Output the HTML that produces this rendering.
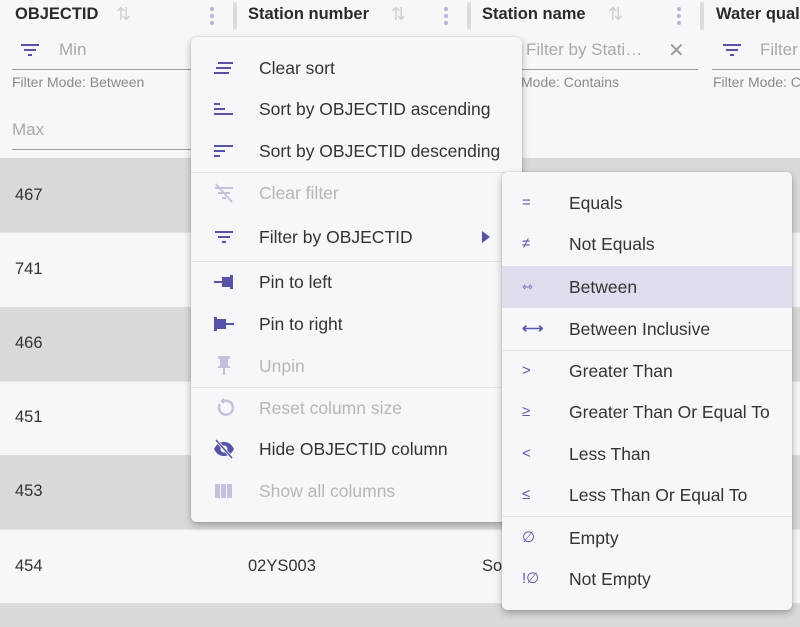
<!DOCTYPE html>
<html><head><meta charset="utf-8"><style>
*{box-sizing:border-box;margin:0;padding:0}
html{width:800px;height:627px;overflow:hidden}
body{width:800px;height:627px;overflow:hidden;background:#f7f7f9;font-family:"Liberation Sans",sans-serif;color:#333;position:relative;white-space:nowrap}
.abs{position:absolute}
.hdr{font-weight:bold;font-size:16.5px;color:#2b2b2b;top:5px}
.row{position:absolute;left:0;width:800px;height:74px}
.g{background:#dadade}
.w{background:#f7f7f9;border-top:1px solid #e4e4e8}
.cell{position:absolute;font-size:16.5px;color:#333}
.menu{position:absolute;background:#f7f7f9;border-radius:5px;box-shadow:0 3px 8px rgba(0,0,0,.28),0 0 1px rgba(0,0,0,.3)}
.it{position:absolute;left:0;right:0;height:42px;font-size:17.5px;line-height:42px}
.it .t{position:absolute;left:68px}
.it .ic{position:absolute;left:22px;top:11px;width:22px;height:20px}
.dis{color:#b5b5bb}
.div{position:absolute;left:0;right:0;height:1px;background:#e2e2e6}
.sub .it .t{left:67px}
.sub .it .ic{left:20px;top:0;color:#5a58a8;font-size:15px;width:auto;height:auto}
.dots{position:absolute;width:4px}
.dots i{display:block;width:4px;height:4px;border-radius:2px;background:#b6b6d8;margin-bottom:3px}
.bar{position:absolute;top:2px;width:4px;height:28px;background:#dcdce0;border-radius:2px}
.fm{position:absolute;font-size:14px;color:#8a8a90;top:74px}
.ph{position:absolute;font-size:17px;color:#a8a8ae}
.ul{position:absolute;height:1px;background:#9a9aa0}
</style></head><body>
<div class="abs hdr" style="left:15px">OBJECTID</div>
<div class="abs" style="left:116px;top:4px;color:#cfcfd6;font-size:18px">⇅</div>
<div class="dots" style="left:210px;top:7px"><i></i><i></i><i></i></div>
<div class="bar" style="left:233px"></div>
<div class="abs hdr" style="left:248px">Station number</div>
<div class="abs" style="left:391px;top:4px;color:#cfcfd6;font-size:18px">⇅</div>
<div class="dots" style="left:444px;top:7px"><i></i><i></i><i></i></div>
<div class="bar" style="left:467px"></div>
<div class="abs hdr" style="left:482px">Station name</div>
<div class="abs" style="left:608px;top:4px;color:#cfcfd6;font-size:18px">⇅</div>
<div class="dots" style="left:677px;top:7px"><i></i><i></i><i></i></div>
<div class="bar" style="left:700px"></div>
<div class="abs hdr" style="left:716px">Water quality</div>
<svg class="abs" style="left:21px;top:44px" width="18" height="14"><g fill="#5652a8"><rect x="0" y="0" width="18" height="2"/><rect x="3" y="5" width="12" height="2"/><rect x="7" y="10" width="4" height="2"/></g></svg>
<div class="ph" style="left:59px;top:40px">Min</div>
<div class="ul" style="left:12px;top:69px;width:180px"></div>
<div class="fm" style="left:12px">Filter Mode: Between</div>
<div class="ph" style="left:12px;top:120px">Max</div>
<div class="ul" style="left:12px;top:149px;width:180px"></div>
<div class="ph" style="left:526px;top:40px">Filter by Stati…</div>
<div class="abs" style="left:668px;top:38px;color:#9a9aa0;font-size:20px">✕</div>
<div class="ul" style="left:490px;top:69px;width:208px"></div>
<div class="fm" style="left:521px">Mode: Contains</div>
<svg class="abs" style="left:723px;top:44px" width="18" height="14"><g fill="#5652a8"><rect x="0" y="0" width="18" height="2"/><rect x="3" y="5" width="12" height="2"/><rect x="7" y="10" width="4" height="2"/></g></svg>
<div class="ph" style="left:760px;top:40px">Filter</div>
<div class="ul" style="left:712px;top:69px;width:88px"></div>
<div class="fm" style="left:713px">Filter Mode: C</div>
<div class="row g" style="top:158px"></div>
<div class="row w" style="top:232px"></div>
<div class="row g" style="top:307px"></div>
<div class="row w" style="top:381px"></div>
<div class="row g" style="top:455px"></div>
<div class="row w" style="top:529px"></div>
<div class="row g" style="top:603px;height:24px"></div>
<div class="cell" style="left:15px;top:186px">467</div>
<div class="cell" style="left:15px;top:260px">741</div>
<div class="cell" style="left:15px;top:334px">466</div>
<div class="cell" style="left:15px;top:408px">451</div>
<div class="cell" style="left:15px;top:482px">453</div>
<div class="cell" style="left:15px;top:557px">454</div>
<div class="cell" style="left:248px;top:557px">02YS003</div>
<div class="cell" style="left:482px;top:557px">So</div>
<div class="menu" style="left:191px;top:37px;width:331px;height:485px">
 <div class="it" style="top:10px"><svg class="ic" viewBox="0 0 22 20"><g fill="#5652a8"><rect x="5" y="4" width="15" height="2"/><rect x="3" y="9" width="15" height="2"/><rect x="1" y="14" width="15" height="2"/></g></svg><span class="t">Clear sort</span></div>
 <div class="it" style="top:51px"><svg class="ic" viewBox="0 0 22 20"><g fill="#5652a8"><rect x="1" y="4" width="6" height="2"/><rect x="1" y="9" width="11" height="2"/><rect x="1" y="14" width="19" height="2"/></g></svg><span class="t">Sort by OBJECTID ascending</span></div>
 <div class="it" style="top:93px"><svg class="ic" viewBox="0 0 22 20"><g fill="#5652a8"><rect x="1" y="4" width="19" height="2"/><rect x="1" y="9" width="11" height="2"/><rect x="1" y="14" width="6" height="2"/></g></svg><span class="t">Sort by OBJECTID descending</span></div>
 <div class="div" style="top:135px"></div>
 <div class="it dis" style="top:135px"><svg class="ic" viewBox="0 0 22 20"><g fill="#c2c2dc"><rect x="2" y="4" width="18" height="2"/><rect x="5" y="9" width="12" height="2"/><rect x="9" y="14" width="4" height="2"/><path d="M3 1L19 19" stroke="#c2c2dc" stroke-width="2"/></g></svg><span class="t">Clear filter</span></div>
 <div class="it" style="top:179px"><svg class="ic" viewBox="0 0 22 20"><g fill="#5652a8"><rect x="2" y="4" width="18" height="2"/><rect x="5" y="9" width="12" height="2"/><rect x="9" y="14" width="4" height="2"/></g></svg><span class="t">Filter by OBJECTID</span><svg style="position:absolute;left:291px;top:15px" width="8" height="12"><path d="M0 0L8 6L0 12Z" fill="#5652a8"/></svg></div>
 <div class="div" style="top:224px"></div>
 <div class="it" style="top:224px"><svg class="ic" viewBox="0 0 22 20"><g fill="#5652a8"><rect x="1" y="9" width="10" height="2"/><path d="M9 5h10v10H9z"/><rect x="17" y="3" width="3" height="14"/></g></svg><span class="t">Pin to left</span></div>
 <div class="it" style="top:266px"><svg class="ic" viewBox="0 0 22 20"><g fill="#5652a8"><rect x="11" y="9" width="10" height="2"/><path d="M3 5h10v10H3z"/><rect x="1" y="3" width="3" height="14"/></g></svg><span class="t">Pin to right</span></div>
 <div class="it dis" style="top:308px"><svg class="ic" viewBox="0 0 22 20"><g fill="#c2c2dc"><rect x="5" y="0" width="12" height="3"/><path d="M7 2h8v7l3 3H4l3-3z"/><rect x="10" y="11" width="2" height="8"/></g></svg><span class="t">Unpin</span></div>
 <div class="div" style="top:350px"></div>
 <div class="it dis" style="top:350px"><svg class="ic" viewBox="0 0 22 20"><path d="M7 6A7 7 0 1 0 11 3" fill="none" stroke="#c2c2dc" stroke-width="2.5"/><path d="M11 0v6l-4-3z" fill="#c2c2dc"/></svg><span class="t">Reset column size</span></div>
 <div class="it" style="top:391px"><svg class="ic" viewBox="0 0 22 20"><path d="M1 10C4 4 8 3 11 3s7 1 10 7c-3 6-7 7-10 7S4 16 1 10z" fill="#5652a8"/><circle cx="11" cy="10" r="3.5" fill="#f7f7f9"/><path d="M3 1L19 19" stroke="#f7f7f9" stroke-width="3"/><path d="M3 1L19 19" stroke="#5652a8" stroke-width="1.5"/></svg><span class="t">Hide OBJECTID column</span></div>
 <div class="it dis" style="top:433px"><svg class="ic" viewBox="0 0 22 20"><g fill="#c2c2dc"><rect x="2" y="3" width="5" height="14"/><rect x="8" y="3" width="5" height="14"/><rect x="14" y="3" width="5" height="14"/></g></svg><span class="t">Show all columns</span></div>
</div>
<div class="menu sub" style="left:502px;top:172px;width:290px;height:438px">
 <div class="it" style="top:10px"><span class="ic">=</span><span class="t">Equals</span></div>
 <div class="it" style="top:51px"><span class="ic">≠</span><span class="t">Not Equals</span></div>
 <div class="it" style="top:94px;background:#dedded"><span class="ic" style="font-size:13px">⇿</span><span class="t">Between</span></div>
 <div class="it" style="top:136px"><span class="ic" style="font-weight:bold">⟷</span><span class="t">Between Inclusive</span></div>
 <div class="div" style="top:178px"></div>
 <div class="it" style="top:178px"><span class="ic">&gt;</span><span class="t">Greater Than</span></div>
 <div class="it" style="top:219px"><span class="ic">≥</span><span class="t">Greater Than Or Equal To</span></div>
 <div class="it" style="top:261px"><span class="ic">&lt;</span><span class="t">Less Than</span></div>
 <div class="it" style="top:302px"><span class="ic">≤</span><span class="t">Less Than Or Equal To</span></div>
 <div class="div" style="top:344px"></div>
 <div class="it" style="top:345px"><span class="ic">∅</span><span class="t">Empty</span></div>
 <div class="it" style="top:386px"><span class="ic">!∅</span><span class="t">Not Empty</span></div>
</div>
</body></html>
